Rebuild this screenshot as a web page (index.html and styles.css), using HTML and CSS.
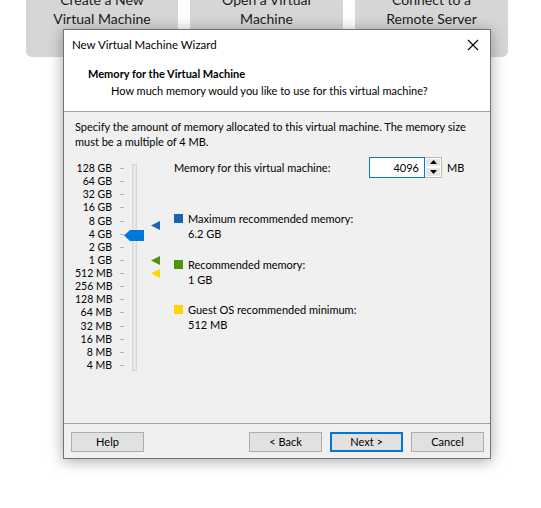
FILE: index.html
```html
<!DOCTYPE html>
<html>
<head>
<meta charset="utf-8">
<link rel="stylesheet" href="styles.css">
</head>
<body>
<div class="desktop">
  <div class="cards">
    <div class="card"><span>Create a New</span><span>Virtual Machine</span></div>
    <div class="card"><span>Open a Virtual</span><span>Machine</span></div>
    <div class="card"><span>Connect to a</span><span>Remote Server</span></div>
  </div>

  <div class="dialog">
    <div class="titlebar">
      <span class="title">New Virtual Machine Wizard</span>
      <svg class="close" width="12" height="12" viewBox="0 0 12 12"><path d="M1 1L11 11M11 1L1 11" stroke="#000" stroke-width="1.1" fill="none"/></svg>
    </div>
    <div class="header">
      <div class="h-title">Memory for the Virtual Machine</div>
      <div class="h-sub">How much memory would you like to use for this virtual machine?</div>
    </div>
    <div class="body">
      <p class="intro">Specify the amount of memory allocated to this virtual machine. The memory size must be a multiple of 4 MB.</p>
      <div class="main">
        <div class="slider">
          <ul class="labels">
            <li>128 GB</li><li>64 GB</li><li>32 GB</li><li>16 GB</li><li>8 GB</li><li>4 GB</li><li>2 GB</li><li>1 GB</li>
            <li>512 MB</li><li>256 MB</li><li>128 MB</li><li>64 MB</li><li>32 MB</li><li>16 MB</li><li>8 MB</li><li>4 MB</li>
          </ul>
          <ul class="ticks">
            <li></li><li></li><li></li><li></li><li></li><li></li><li></li><li></li>
            <li></li><li></li><li></li><li></li><li></li><li></li><li></li><li></li>
          </ul>
          <div class="track"></div>
          <svg class="thumb" width="20" height="11" viewBox="0 0 20 11"><path d="M0 5.5L6 0H20V11H6Z" fill="#0078d7"/></svg>
          <svg class="mark mark-max" width="9" height="9" viewBox="0 0 9 9"><path d="M0 4.5L9 0V9Z" fill="#1d63ae"/></svg>
          <svg class="mark mark-rec" width="9" height="9" viewBox="0 0 9 9"><path d="M0 4.5L9 0V9Z" fill="#4b9410"/></svg>
          <svg class="mark mark-min" width="9" height="9" viewBox="0 0 9 9"><path d="M0 4.5L9 0V9Z" fill="#fdd600"/></svg>
        </div>
        <div class="info">
          <div class="mem-row">
            <span class="mem-label">Memory for this virtual machine:</span>
            <div class="spin">
              <div class="spin-input">4096</div>
              <div class="spin-btns">
                <div class="spin-btn"><svg width="7" height="4" viewBox="0 0 7 4"><path d="M0 4L3.5 0L7 4Z" fill="#000"/></svg></div>
                <div class="spin-btn"><svg width="7" height="4" viewBox="0 0 7 4"><path d="M0 0L3.5 4L7 0Z" fill="#000"/></svg></div>
              </div>
            </div>
            <span class="unit">MB</span>
          </div>
          <div class="legend">
            <div class="item">
              <div class="item-head"><span class="sq sq-blue"></span>Maximum recommended memory:</div>
              <div class="item-val">6.2 GB</div>
            </div>
            <div class="item">
              <div class="item-head"><span class="sq sq-green"></span>Recommended memory:</div>
              <div class="item-val">1 GB</div>
            </div>
            <div class="item">
              <div class="item-head"><span class="sq sq-yellow"></span>Guest OS recommended minimum:</div>
              <div class="item-val">512 MB</div>
            </div>
          </div>
        </div>
      </div>
    </div>
    <div class="footer">
      <button class="btn">Help</button>
      <div class="spacer"></div>
      <button class="btn">&lt; Back</button>
      <button class="btn btn-default">Next &gt;</button>
      <button class="btn">Cancel</button>
    </div>
  </div>
</div>
</body>
</html>
```

FILE: styles.css
```css
* { box-sizing: border-box; }
html, body { margin: 0; padding: 0; background: #fff; }
body { font-family: Lato, "Noto Sans", sans-serif; font-size: 11px; color: #000; }
.desktop { position: relative; width: 541px; height: 508px; overflow: hidden; }

.cards { display: flex; gap: 12px; padding-left: 26px; margin-top: -16px; }
.card {
  width: 152px; height: 73px; background: #d6d6d6; border-radius: 6px;
  display: flex; flex-direction: column; align-items: center;
  padding-top: 6px; font-size: 14px; line-height: 19px; color: #1a1a1a;
}
.card:nth-child(2) { width: 153px; }
.card:nth-child(3) { width: 153px; }

.dialog {
  position: absolute; left: 63px; top: 29px; width: 428px; height: 430px;
  border: 1px solid #737373; background: #f0f0f0;
  box-shadow: 0 2px 14px rgba(0,0,0,0.35);
  display: flex; flex-direction: column;
}
.titlebar {
  height: 29px; background: #fff; display: flex; align-items: center;
  padding-left: 8px; padding-right: 10px; justify-content: space-between;
}
.title { font-size: 11.5px; }
.close { margin-top: 1px; margin-right: 1px; }
.header { background: #fff; height: 53px; border-bottom: 1px solid #a0a0a0; padding-top: 7px; }
.h-title { font-weight: bold; padding-left: 24px; line-height: 16px; }
.h-sub { padding-left: 47px; line-height: 18px; }

.body { flex: 1; padding: 7px 11px 0 11px; }
.intro { margin: 0; line-height: 15px; }
.main { display: flex; margin-top: 13px; }

.slider { position: relative; display: flex; width: 99px; }
.labels, .ticks { list-style: none; margin: 0; padding: 0; }
.labels { width: 37px; text-align: right; font-size: 10.5px; }
.labels li { height: 13.13px; line-height: 13.13px; white-space: nowrap; }
.ticks { width: 20px; padding-left: 8px; }
.ticks li { height: 13.13px; display: flex; align-items: center; }
.ticks li::after { content: ""; display: block; width: 4px; height: 1px; background: #b4b4b4; }
.track {
  width: 5px; height: 207px; margin-top: 2px;
  background: #e7e7e7; border: 1px solid #d6d6d6;
}
.thumb { position: absolute; left: 49px; top: 68px; }
.mark { position: absolute; left: 76px; }
.mark-max { top: 59px; }
.mark-rec { top: 94px; }
.mark-min { top: 107px; }

.info { flex: 1; }
.mem-row { display: flex; align-items: center; margin-top: -5.5px; height: 21px; }
.mem-label { width: 195px; }
.spin { display: flex; height: 21px; }
.spin-input {
  width: 56px; height: 21px; border: 1px solid #0078d7; background: #fff;
  text-align: right; padding-right: 5px; line-height: 19px;
}
.spin-btns { display: flex; flex-direction: column; width: 17px; border: 1px solid #b9b9b9; border-left: none; background: #fff; }
.spin-btn {
  flex: 1; display: flex; align-items: center; justify-content: center;
  background: #e5e5e5; border: 1px solid #fff;
}
.unit { padding-left: 5px; }

.legend { margin-top: 33.5px; display: flex; flex-direction: column; gap: 15.5px; }
.item { line-height: 15px; }
.item-head { display: flex; align-items: center; }
.sq { display: inline-block; width: 9px; height: 9px; margin-right: 5px; }
.sq-blue { background: #1d63ae; }
.sq-green { background: #4b9410; }
.sq-yellow { background: #fdd600; }
.item-val { padding-left: 14px; }

.footer {
  height: 35px; border-top: 1px solid #a0a0a0; display: flex; align-items: flex-start;
  padding: 8px 6px 0 7px; gap: 8px;
}
.spacer { flex: 1; }
.btn {
  width: 73px; height: 20px; background: #e1e1e1; border: 1px solid #adadad;
  font-family: Lato, "Noto Sans", sans-serif; font-size: 11px; color: #000;
  padding: 0 0 2px 0; line-height: 15px;
}
.btn-default { border: 2px solid #0078d7; }
```
